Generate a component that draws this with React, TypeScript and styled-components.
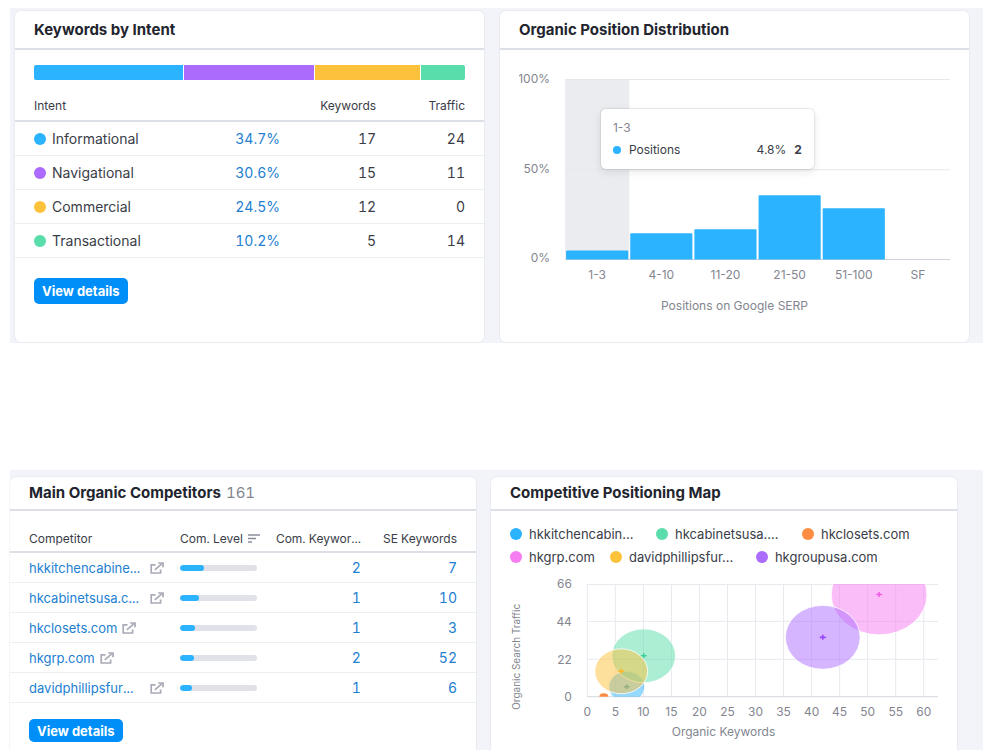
import React from "react";
import styled, { createGlobalStyle } from "styled-components";

const color = {
  blue: "#2bb3ff",
  purple: "#ab6cfe",
  yellow: "#fdc23c",
  green: "#59ddaa",
  orange: "#ff8c43",
  pink: "#f67cf2",
  text: "#3a3d47",
  heading: "#22252e",
  muted: "#83868f",
  link: "#2280d2",
  line: "#dcdfe6",
  rowLine: "#eeeff3",
  canvas: "#f3f4f9",
};

const GlobalStyle = createGlobalStyle`
  * { box-sizing: border-box; }
  body {
    margin: 0;
    background: #fff;
    color: ${color.text};
    font-family: Inter, "Liberation Sans", sans-serif;
    font-size: 14px;
  }
`;

const Page = styled.main`
  display: flex;
  flex-direction: column;
  gap: 127px;
  min-height: 100vh;
  padding: 8px 17px 0 10px;
`;

const Band = styled.section<{ $bleed?: boolean }>`
  display: grid;
  grid-template-columns: minmax(0, 1fr) minmax(0, 1fr);
  gap: ${(p) => (p.$bleed ? "15px" : "16px")};
  background: ${color.canvas};
  padding: ${(p) => (p.$bleed ? "7px 26px 0 0" : "3px 14px 1px 5px")};
  flex: ${(p) => (p.$bleed ? "1 0 auto" : "0 0 auto")};
`;

const Card = styled.article<{ $open?: boolean }>`
  background: #fff;
  border-radius: ${(p) => (p.$open ? "6px 6px 0 0" : "6px")};
  box-shadow: 0 0 1px 1px rgba(25, 30, 60, 0.04);
  min-width: 0;
`;

const CardHeader = styled.header<{ $compact?: boolean }>`
  display: flex;
  align-items: center;
  gap: 5px;
  height: ${(p) => (p.$compact ? "34px" : "39px")};
  padding: 0 19px;
  border-bottom: 2px solid ${color.line};
`;

const Title = styled.h2`
  margin: 0;
  font-size: 15px;
  line-height: 20px;
  font-weight: 700;
  color: ${color.heading};
`;

const Count = styled.span`
  font-size: 15px;
  line-height: 20px;
  color: ${color.muted};
  font-variant-numeric: tabular-nums;
`;

const StackedBar = styled.div`
  display: flex;
  gap: 1px;
  height: 15px;
  margin: 15px 19px 0;
  border-radius: 2px;
  overflow: hidden;
`;

const Segment = styled.div<{ $color: string; $share: number }>`
  flex: ${(p) => p.$share} 1 0;
  background: ${(p) => p.$color};
`;

const Table = styled.table<{ $top: number }>`
  width: 100%;
  margin-top: ${(p) => p.$top}px;
  table-layout: fixed;
  border-collapse: separate;
  border-spacing: 0;
  font-variant-numeric: tabular-nums;
`;

const Th = styled.th<{ $align?: "left" | "right"; $raised?: boolean }>`
  height: 28px;
  padding: 0 0 ${(p) => (p.$raised ? "4px" : "0")};
  border-bottom: 2px solid ${color.line};
  font-size: 12px;
  font-weight: 400;
  text-align: ${(p) => p.$align || "left"};
  white-space: nowrap;
  &:first-child { padding-left: 19px; }
  &:last-child { padding-right: 19px; }
`;

const Td = styled.td<{ $align?: "left" | "right"; $height: number }>`
  height: ${(p) => p.$height}px;
  padding: 0;
  border-bottom: 1px solid ${color.rowLine};
  text-align: ${(p) => p.$align || "left"};
  white-space: nowrap;
  &:first-child { padding-left: 19px; }
  &:last-child { padding-right: 19px; }
`;

const Col = styled.col<{ $width: string }>`
  width: ${(p) => p.$width};
`;

const Label = styled.span`
  display: flex;
  align-items: center;
  gap: 6px;
`;

const Dot = styled.span<{ $color: string; $size?: number }>`
  flex: none;
  width: ${(p) => p.$size || 12}px;
  height: ${(p) => p.$size || 12}px;
  border-radius: 50%;
  background: ${(p) => p.$color};
`;

const Link = styled.a`
  color: ${color.link};
  text-decoration: none;
`;

const DetailsButton = styled.button<{ $compact?: boolean }>`
  display: block;
  height: ${(p) => (p.$compact ? "23px" : "26px")};
  margin: ${(p) => (p.$compact ? "16px 19px 8px" : "20px 19px 38px")};
  padding: 0 8px;
  border: 0;
  border-radius: 5px;
  background: #008ff8;
  color: #fff;
  font-family: inherit;
  font-size: 13px;
  line-height: 20px;
  font-weight: 700;
`;

const Competitor = styled.span`
  display: flex;
  align-items: center;
  gap: 5px;
  font-size: 13px;
`;

const CompetitorName = styled(Link)<{ $clipped?: boolean }>`
  min-width: ${(p) => (p.$clipped ? "116px" : "0")};
`;

const IconLink = styled.a`
  display: flex;
  color: #a9abb6;
`;

const SortLabel = styled.span`
  display: flex;
  align-items: center;
  gap: 5px;
`;

const Track = styled.div`
  width: 77px;
  height: 6px;
  border-radius: 3px;
  background: #e0e1e9;
  overflow: hidden;
`;

const Fill = styled.div`
  height: 100%;
  border-radius: 3px;
  background: ${color.blue};
`;

const ChartArea = styled.div<{ $top: number }>`
  position: relative;
  margin: ${(p) => p.$top}px 19px 0;
`;

const Chart = styled.svg`
  display: block;
  width: 100%;
  height: auto;
  font-size: 12px;
  fill: ${color.muted};
`;

const VerticalLabel = styled.text`
  font-size: 10px;
`;

const Tooltip = styled.div`
  position: absolute;
  left: 19%;
  top: 39px;
  width: 213px;
  padding: 9px 12px;
  border-radius: 5px;
  background: #fff;
  box-shadow: 0 0 1px 1px rgba(25, 27, 35, 0.08), 0 3px 8px rgba(25, 27, 35, 0.1);
  font-size: 12px;
  line-height: 20px;
`;

const TooltipTitle = styled.div`
  color: ${color.muted};
`;

const TooltipRow = styled.div`
  display: flex;
  align-items: center;
  gap: 8px;
  margin-top: 2px;
`;

const TooltipShare = styled.span`
  margin-left: auto;
`;

const Legend = styled.ul`
  display: flex;
  flex-wrap: wrap;
  gap: 3px 15px;
  margin: 13px 19px 0;
  padding: 0;
  list-style: none;
  font-size: 13px;
  line-height: 20px;
`;

const LegendItem = styled.li`
  display: flex;
  align-items: center;
  gap: 7px;
`;

const LegendText = styled.span<{ $clipped?: boolean }>`
  min-width: ${(p) => (p.$clipped ? "112px" : "0")};
`;

const intents = [
  { name: "Informational", share: 34.7, keywords: 17, traffic: 24, color: color.blue },
  { name: "Navigational", share: 30.6, keywords: 15, traffic: 11, color: color.purple },
  { name: "Commercial", share: 24.5, keywords: 12, traffic: 0, color: color.yellow },
  { name: "Transactional", share: 10.2, keywords: 5, traffic: 14, color: color.green },
];

const positions = [
  { range: "1-3", height: 9 },
  { range: "4-10", height: 26 },
  { range: "11-20", height: 30 },
  { range: "21-50", height: 64 },
  { range: "51-100", height: 51 },
  { range: "SF", height: 0 },
];

const competitors = [
  { name: "hkkitchencabine...", clipped: true, level: 31, common: 2, se: 7 },
  { name: "hkcabinetsusa.c...", clipped: true, level: 25, common: 1, se: 10 },
  { name: "hkclosets.com", clipped: false, level: 19, common: 1, se: 3 },
  { name: "hkgrp.com", clipped: false, level: 18, common: 2, se: 52 },
  { name: "davidphillipsfur...", clipped: true, level: 16, common: 1, se: 6 },
];

const legend = [
  { name: "hkkitchencabin...", clipped: true, color: color.blue },
  { name: "hkcabinetsusa....", clipped: true, color: color.green },
  { name: "hkclosets.com", clipped: false, color: color.orange },
  { name: "hkgrp.com", clipped: false, color: color.pink },
  { name: "davidphillipsfur...", clipped: true, color: color.yellow },
  { name: "hkgroupusa.com", clipped: false, color: color.purple },
];

const bubbles = [
  { cx: 117, cy: 112, rx: 18, ry: 15.5, color: color.blue, mark: "#2e9fc0" },
  { cx: 134, cy: 81, rx: 32, ry: 27, color: color.green, mark: "#3fd09a" },
  { cx: 111.5, cy: 96.5, rx: 26.5, ry: 22.5, color: color.yellow, mark: "#fdb92c" },
  { cx: 370, cy: 19.5, rx: 48, ry: 40.5, color: color.pink, mark: "#ee5fe8" },
  { cx: 313.5, cy: 62.5, rx: 37.5, ry: 32, color: color.purple, mark: "#9747fb" },
];

function ExternalIcon() {
  return (
    <svg width="14" height="12" viewBox="0 0 14 12" fill="none" stroke="currentColor" strokeWidth="1.7" aria-hidden="true">
      <path d="M5.5 2.8H1.2V11H10.6V7.4" />
      <path d="M4.8 7.9L12 1.6" />
      <path d="M8.2 1H13V5.2" />
    </svg>
  );
}

function SortIcon() {
  return (
    <svg width="12" height="9" viewBox="0 0 12 9" fill="none" stroke="#8b8e9a" strokeWidth="1.5" aria-hidden="true">
      <path d="M0 1H12M0 4.5H8M0 8H4" />
    </svg>
  );
}

function PositionChart() {
  return (
    <Chart viewBox="0 0 430 245" role="img" aria-label="Organic position distribution">
      <rect x="46" y="9" width="64" height="180" fill="#ebecf0" />
      <path d="M46 9.5H430M46 99.5H430" stroke="#e6e7ec" />
      <path d="M46 189H430" stroke="#cfd1db" />
      <g textAnchor="end">
        <text x="31" y="13">100%</text>
        <text x="31" y="103">50%</text>
        <text x="31" y="192">0%</text>
      </g>
      {positions.map((p, i) => (
        <g key={p.range}>
          {p.height > 0 && (
            <path
              d={`M${47 + i * 64} 189v${1 - p.height}q0 -1 1 -1h60q1 0 1 1v${p.height - 1}z`}
              fill={color.blue}
            />
          )}
          <text x={78 + i * 64} y="209" textAnchor="middle">{p.range}</text>
        </g>
      ))}
      <text x="215" y="239" textAnchor="middle">Positions on Google SERP</text>
    </Chart>
  );
}

function PositioningMap() {
  const ticks = Array.from({ length: 13 }, (_, i) => i * 5);
  const x = (v: number) => 77.5 + v * 5.62;
  return (
    <Chart viewBox="0 0 429 165" role="img" aria-label="Competitive positioning map">
      <defs>
        <clipPath id="plot">
          <rect x="77" y="9" width="352" height="113" />
        </clipPath>
      </defs>
      <g stroke="#e8e9ef">
        {ticks.map((t) => (
          <path key={t} d={`M${x(t)} 9V122`} />
        ))}
        <path d="M77 9.5H429M77 46.5H429M77 84.5H429" />
      </g>
      <path d="M77 122H429" stroke="#d5d7df" />
      <g clipPath="url(#plot)">
        <ellipse cx="94" cy="122" rx="4.5" ry="3.5" fill={color.orange} />
        {bubbles.map((b) => (
          <g key={b.color}>
            <ellipse cx={b.cx} cy={b.cy} rx={b.rx} ry={b.ry} fill={b.color} fillOpacity="0.5" stroke="#fff" strokeOpacity="0.8" />
            <path d={`M${b.cx - 3} ${b.cy}h6M${b.cx} ${b.cy - 2.5}v5`} stroke={b.mark} strokeWidth="1.6" />
          </g>
        ))}
      </g>
      <g textAnchor="end">
        <text x="62" y="13">66</text>
        <text x="62" y="51">44</text>
        <text x="62" y="89">22</text>
        <text x="62" y="126">0</text>
      </g>
      <g textAnchor="middle">
        {ticks.map((t) => (
          <text key={t} x={x(t)} y="141">{t}</text>
        ))}
        <text x="214" y="161">Organic Keywords</text>
        <VerticalLabel transform="translate(10 82) rotate(-90)">Organic Search Traffic</VerticalLabel>
      </g>
    </Chart>
  );
}

export default function App() {
  return (
    <>
      <GlobalStyle />
      <Page>
        <Band>
          <Card>
            <CardHeader>
              <Title>Keywords by Intent</Title>
            </CardHeader>
            <StackedBar>
              {intents.map((i) => (
                <Segment key={i.name} $color={i.color} $share={i.share} />
              ))}
            </StackedBar>
            <Table $top={14}>
              <colgroup>
                <Col $width="36%" />
                <Col $width="20.5%" />
                <Col $width="20.5%" />
                <Col $width="23%" />
              </colgroup>
              <thead>
                <tr>
                  <Th scope="col" $raised>Intent</Th>
                  <Th $raised aria-label="Share" />
                  <Th scope="col" $raised $align="right">Keywords</Th>
                  <Th scope="col" $raised $align="right">Traffic</Th>
                </tr>
              </thead>
              <tbody>
                {intents.map((i) => (
                  <tr key={i.name}>
                    <Td $height={34}>
                      <Label>
                        <Dot $color={i.color} />
                        {i.name}
                      </Label>
                    </Td>
                    <Td $height={34} $align="right"><Link href="#share">{i.share}%</Link></Td>
                    <Td $height={34} $align="right">{i.keywords}</Td>
                    <Td $height={34} $align="right">{i.traffic}</Td>
                  </tr>
                ))}
              </tbody>
            </Table>
            <DetailsButton type="button">View details</DetailsButton>
          </Card>
          <Card>
            <CardHeader>
              <Title>Organic Position Distribution</Title>
            </CardHeader>
            <ChartArea $top={20}>
              <PositionChart />
              <Tooltip role="tooltip">
                <TooltipTitle>1-3</TooltipTitle>
                <TooltipRow>
                  <Dot $color={color.blue} $size={8} />
                  <span>Positions</span>
                  <TooltipShare>4.8%</TooltipShare>
                  <strong>2</strong>
                </TooltipRow>
              </Tooltip>
            </ChartArea>
          </Card>
        </Band>
        <Band $bleed>
          <Card $open>
            <CardHeader $compact>
              <Title>Main Organic Competitors</Title>
              <Count>161</Count>
            </CardHeader>
            <Table $top={14}>
              <colgroup>
                <Col $width="36.5%" />
                <Col $width="18.5%" />
                <Col $width="20.3%" />
                <Col $width="24.7%" />
              </colgroup>
              <thead>
                <tr>
                  <Th scope="col">Competitor</Th>
                  <Th scope="col"><SortLabel>Com. Level <SortIcon /></SortLabel></Th>
                  <Th scope="col" $align="right">Com. Keywor...</Th>
                  <Th scope="col" $align="right">SE Keywords</Th>
                </tr>
              </thead>
              <tbody>
                {competitors.map((c) => (
                  <tr key={c.name}>
                    <Td $height={30}>
                      <Competitor>
                        <CompetitorName href="#competitor" $clipped={c.clipped}>{c.name}</CompetitorName>
                        <IconLink href="#open" aria-label={`Open ${c.name}`}><ExternalIcon /></IconLink>
                      </Competitor>
                    </Td>
                    <Td $height={30}><Track><Fill style={{ width: `${c.level}%` }} /></Track></Td>
                    <Td $height={30} $align="right"><Link href="#common">{c.common}</Link></Td>
                    <Td $height={30} $align="right"><Link href="#se">{c.se}</Link></Td>
                  </tr>
                ))}
              </tbody>
            </Table>
            <DetailsButton type="button" $compact>View details</DetailsButton>
          </Card>
          <Card $open>
            <CardHeader $compact>
              <Title>Competitive Positioning Map</Title>
            </CardHeader>
            <Legend>
              {legend.map((l) => (
                <LegendItem key={l.name}>
                  <Dot $color={l.color} />
                  <LegendText $clipped={l.clipped}>{l.name}</LegendText>
                </LegendItem>
              ))}
            </Legend>
            <ChartArea $top={8}>
              <PositioningMap />
            </ChartArea>
          </Card>
        </Band>
      </Page>
    </>
  );
}
